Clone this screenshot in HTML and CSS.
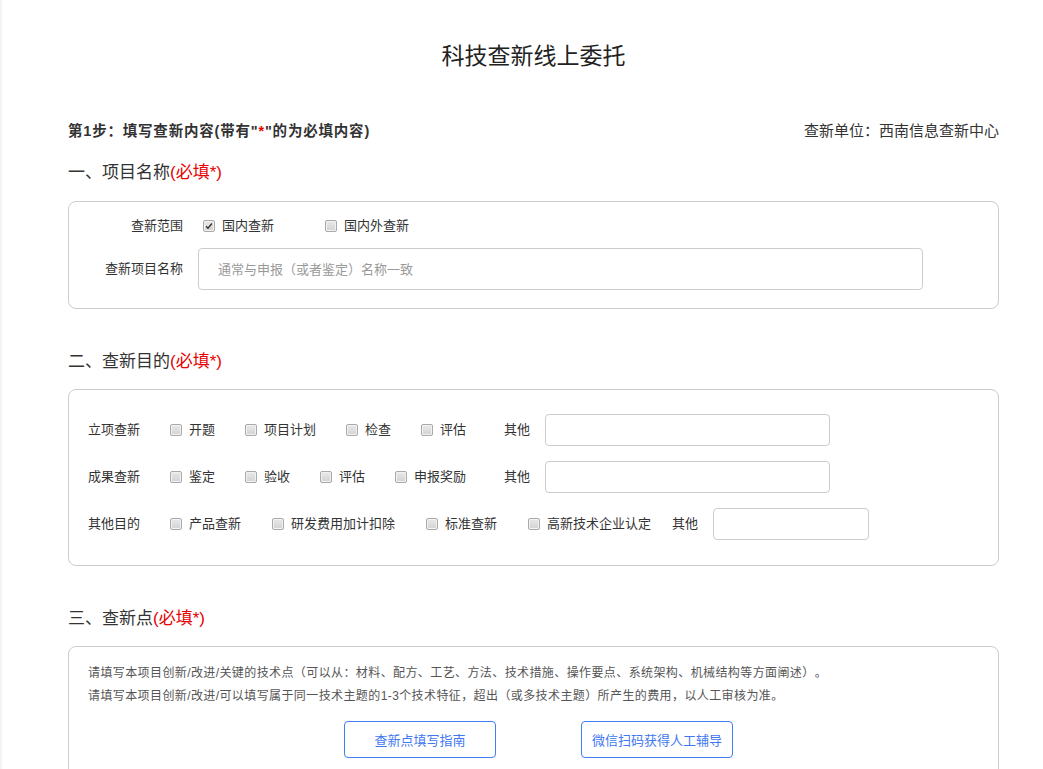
FILE: index.html
```html
<!DOCTYPE html>
<html lang="zh-CN">
<head>
<meta charset="utf-8">
<title>科技查新线上委托</title>
<link rel="stylesheet" href="styles.css">
</head>
<body>
<div class="page">
  <h1 class="title">科技查新线上委托</h1>

  <div class="step">
    <span class="step-text">第1步：填写查新内容(带有"<span class="red">*</span>"的为必填内容)</span>
    <span class="unit">查新单位：西南信息查新中心</span>
  </div>

  <h2 class="sec sec-first">一、项目名称<span class="red">(必填*)</span></h2>
  <div class="box box1">
    <div class="frow">
      <span class="flabel">查新范围</span>
      <span class="opt opt-first"><span class="cb"><svg viewBox="0 0 12 12" width="10" height="10"><path d="M2.5 6.2 L4.8 8.6 L9.5 3" fill="none" stroke="#333" stroke-width="1.7"/></svg></span>国内查新</span>
      <span class="opt opt-wide"><span class="cb"></span>国内外查新</span>
    </div>
    <div class="frow frow2">
      <span class="flabel">查新项目名称</span>
      <input class="tinput" type="text" placeholder="通常与申报（或者鉴定）名称一致">
    </div>
  </div>

  <h2 class="sec">二、查新目的<span class="red">(必填*)</span></h2>
  <div class="box box2">
    <div class="prow">
      <span class="plabel">立项查新</span>
      <span class="opt"><span class="cb"></span>开题</span>
      <span class="opt"><span class="cb"></span>项目计划</span>
      <span class="opt"><span class="cb"></span>检查</span>
      <span class="opt"><span class="cb"></span>评估</span>
      <span class="other">其他</span>
      <input class="oinput" type="text">
    </div>
    <div class="prow">
      <span class="plabel">成果查新</span>
      <span class="opt"><span class="cb"></span>鉴定</span>
      <span class="opt"><span class="cb"></span>验收</span>
      <span class="opt"><span class="cb"></span>评估</span>
      <span class="opt"><span class="cb"></span>申报奖励</span>
      <span class="other">其他</span>
      <input class="oinput" type="text">
    </div>
    <div class="prow prow3">
      <span class="plabel">其他目的</span>
      <span class="opt"><span class="cb"></span>产品查新</span>
      <span class="opt"><span class="cb"></span>研发费用加计扣除</span>
      <span class="opt"><span class="cb"></span>标准查新</span>
      <span class="opt"><span class="cb"></span>高新技术企业认定</span>
      <span class="other">其他</span>
      <input class="oinput oinput-short" type="text">
    </div>
  </div>

  <h2 class="sec sec3">三、查新点<span class="red">(必填*)</span></h2>
  <div class="box box3">
    <p class="note">请填写本项目创新/改进/关键的技术点（可以从：材料、配方、工艺、方法、技术措施、操作要点、系统架构、机械结构等方面阐述）。</p>
    <p class="note">请填写本项目创新/改进/可以填写属于同一技术主题的1-3个技术特征，超出（或多技术主题）所产生的费用，以人工审核为准。</p>
    <div class="btns">
      <button class="obtn" type="button">查新点填写指南</button>
      <button class="obtn" type="button">微信扫码获得人工辅导</button>
    </div>
  </div>
</div>
</body>
</html>
```

FILE: styles.css
```css
html, body {
  margin: 0;
  padding: 0;
  background: #fff;
}
body {
  border-left: 2px solid #f3f3f3;
  font-family: "Liberation Sans", "Noto Sans CJK SC", sans-serif;
  color: #333;
  text-spacing-trim: space-all;
}
.page {
  padding: 0 44px 40px 66px;
}
.title {
  margin: 0;
  padding-top: 38px;
  font-size: 23px;
  line-height: 32px;
  font-weight: normal;
  text-align: center;
  color: #222;
  font-family: "Noto Sans CJK SC", sans-serif;
}
.red { color: #e60000; }
.step {
  display: flex;
  justify-content: space-between;
  align-items: center;
  margin-top: 51px;
  height: 20px;
  line-height: 20px;
}
.step-text { font-size: 14.5px; font-weight: bold; letter-spacing: 0.8px; }
.unit { font-size: 15px; color: #333; }
.sec {
  margin: 41px 0 15px;
  font-size: 17px;
  line-height: 24px;
  font-weight: normal;
  color: #333;
}
.sec-first { margin-top: 20px; margin-bottom: 16px; }
.sec3 { margin-top: 41px; margin-bottom: 15px; }
.box {
  border: 1px solid #ccc;
  border-radius: 8px;
}
.box1 { padding: 14px 0 18px; }
.frow {
  display: flex;
  align-items: center;
  height: 20px;
  font-size: 13px;
  line-height: 20px;
}
.frow2 { height: 42px; margin-top: 12px; }
.flabel {
  width: 114px;
  margin-right: 15px;
  text-align: right;
  color: #333;
}
.opt {
  display: inline-flex;
  align-items: center;
  margin-right: 30px;
  font-size: 13px;
  line-height: 20px;
  color: #333;
  white-space: nowrap;
}
.opt-first { margin-left: 5px; margin-right: 51px; }
.cb {
  box-sizing: border-box;
  width: 12px;
  height: 12px;
  margin-right: 7px;
  border: 1px solid #a9a9a9;
  border-radius: 2px;
  background: linear-gradient(to bottom, #e9e9e9, #d2d2d2);
  box-shadow: inset 0 0 0 1px #f2f2f2;
  display: inline-flex;
  align-items: center;
  justify-content: center;
}
.cb svg { display: block; }
.tinput {
  box-sizing: border-box;
  width: 725px;
  height: 42px;
  padding: 0 0 0 19px;
  border: 1px solid #ccc;
  border-radius: 4px;
  font-size: 13px;
  font-family: "Liberation Sans", "Noto Sans CJK SC", sans-serif;
  color: #333;
  outline: none;
}
.tinput::placeholder { color: #999; }
.box2 {
  padding: 24px 0 25px 19px;
  display: flex;
  flex-direction: column;
  gap: 15px;
}
.prow {
  display: flex;
  align-items: center;
  height: 32px;
  font-size: 13px;
  line-height: 20px;
}
.plabel { width: 82px; color: #333; }
.prow3 .opt { margin-right: 31px; }
.other { margin: 0 15px 0 8px; color: #333; }
.prow3 .other { margin-left: -10px; }
.oinput {
  box-sizing: border-box;
  width: 285px;
  height: 32px;
  border: 1px solid #ccc;
  border-radius: 4px;
  outline: none;
}
.oinput-short { width: 156px; }
.box3 { padding: 15px 19px 30px; }
.note {
  margin: 0;
  font-size: 12px;
  line-height: 23px;
  letter-spacing: 0.4px;
  color: #555;
}
.btns {
  display: flex;
  justify-content: center;
  gap: 85px;
  margin-top: 13px;
  padding-left: 10px;
}
.obtn {
  box-sizing: border-box;
  width: 152px;
  height: 37px;
  border: 1px solid #3f7ef5;
  border-radius: 4px;
  background: #fff;
  color: #3f78f0;
  font-size: 13px;
  font-family: "Liberation Sans", "Noto Sans CJK SC", sans-serif;
  cursor: pointer;
}
```
